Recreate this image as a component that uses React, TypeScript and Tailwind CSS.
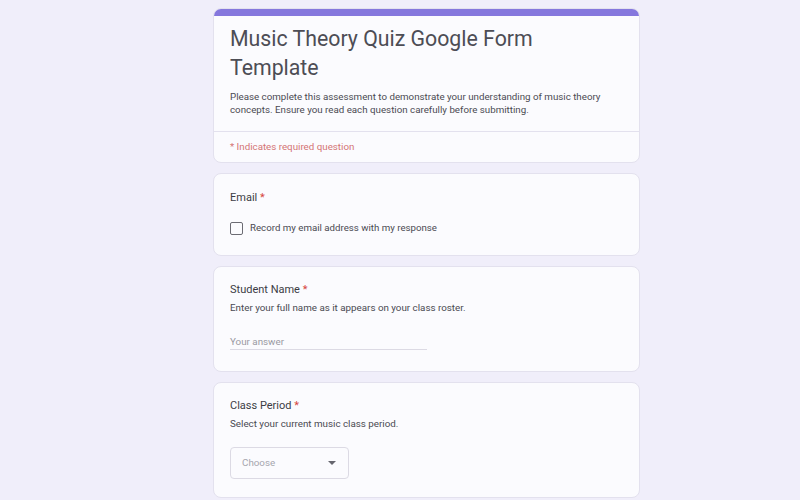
function Required() {
  return <span className="text-[#d6453d]"> *</span>;
}

function Card({ children, className = "" }: { children: React.ReactNode; className?: string }) {
  return (
    <div className={`rounded-lg border border-[#e3e1ee] bg-[#fbfbfe] ${className}`}>
      {children}
    </div>
  );
}

export default function App() {
  return (
    <div
      className="min-h-[500px] bg-[#f0eefa] pt-2"
      style={{ fontFamily: "Roboto, 'Liberation Sans', sans-serif" }}
    >
      <div className="ml-[213px] flex w-[427px] flex-col gap-[10px] pb-4">
        <Card className="overflow-hidden">
          <div className="h-[7px] bg-[#8577dd]" />
          <div className="px-[16px] pb-[15px] pt-[8px]">
            <h1 className="text-[21.3px] leading-[29px] text-[#4d4d55]">
              Music Theory Quiz Google Form Template
            </h1>
            <p className="mt-[8px] text-[9.75px] leading-[13px] text-[#4a4a52]">
              Please complete this assessment to demonstrate your understanding of music theory
              concepts. Ensure you read each question carefully before submitting.
            </p>
          </div>
          <div className="border-t border-[#e3e1ee] px-[16px] py-[8px] text-[9.75px] leading-[14px] text-[#d47474]">
            * Indicates required question
          </div>
        </Card>

        <Card className="px-[16px] pb-[20px] pt-[16px]">
          <div className="text-[11px] leading-[15px] text-[#3c3c44]">
            Email<Required />
          </div>
          <label className="mt-[16px] flex items-center gap-[7px]">
            <span className="h-[13px] w-[13px] rounded-[2px] border-[1.5px] border-[#6b6b73]" />
            <span className="text-[9.7px] leading-[14px] text-[#4a4a52]">
              Record my email address with my response
            </span>
          </label>
        </Card>

        <Card className="px-[16px] pb-[21px] pt-[15px]">
          <div className="text-[11px] leading-[15px] text-[#3c3c44]">
            Student Name<Required />
          </div>
          <div className="mt-[4px] text-[9.8px] leading-[14px] text-[#4a4a52]">
            Enter your full name as it appears on your class roster.
          </div>
          <div className="mt-[20px] w-[197px] border-b border-[#dcdae4] text-[9.8px] leading-[14px] text-[#9a9aa2]">
            Your answer
          </div>
        </Card>

        <Card className="px-[16px] pb-[18px] pt-[15px]">
          <div className="text-[11px] leading-[15px] text-[#3c3c44]">
            Class Period<Required />
          </div>
          <div className="mt-[4px] text-[9.8px] leading-[14px] text-[#4a4a52]">
            Select your current music class period.
          </div>
          <div className="mt-[16px] flex h-[32px] w-[119px] items-center justify-between rounded-[4px] border border-[#dcdae4] pl-[11px] pr-[12px]">
            <span className="text-[9.8px] text-[#a6a6ae]">Choose</span>
            <svg width="8" height="4" viewBox="0 0 8 4">
              <path d="M0 0 L8 0 L4 4 Z" fill="#66666e" />
            </svg>
          </div>
        </Card>
      </div>
    </div>
  );
}
